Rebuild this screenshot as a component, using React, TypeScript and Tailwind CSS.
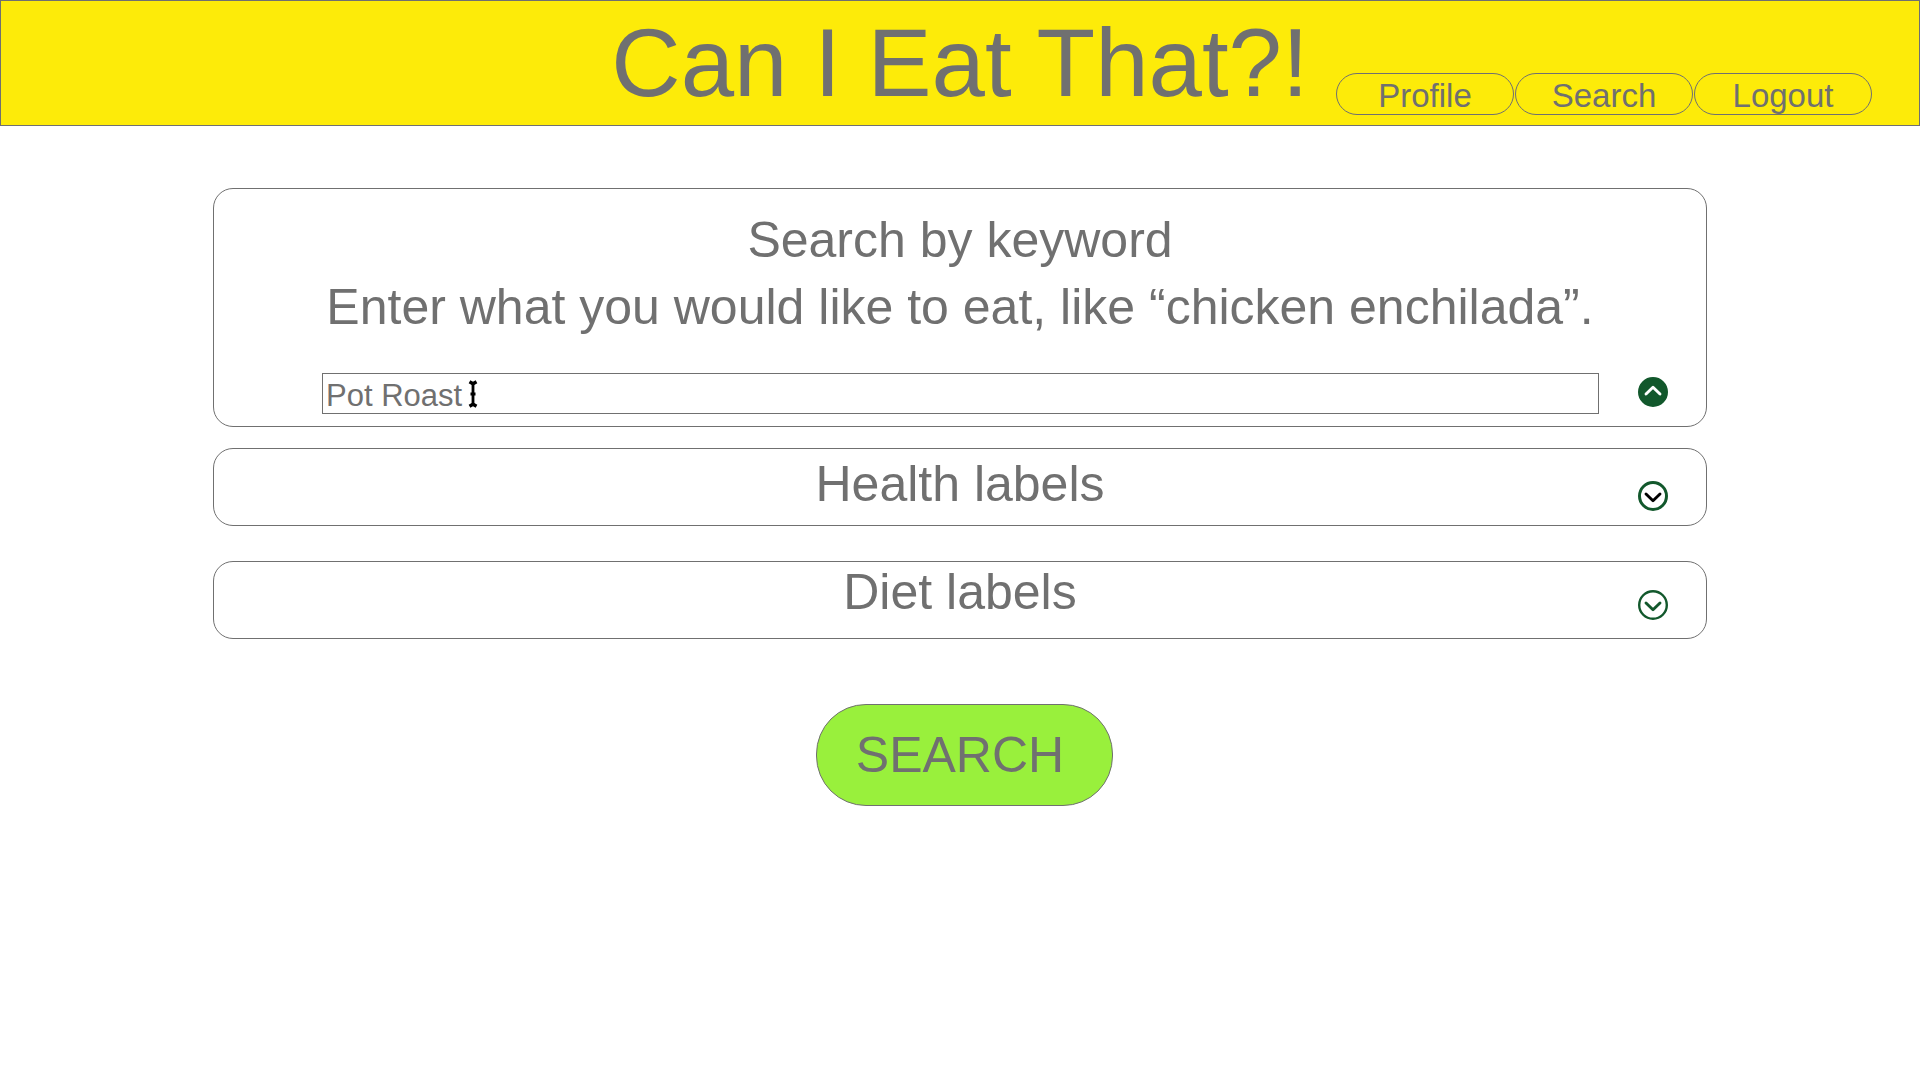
import { useState } from "react";

type ChevronProps = { direction: "up" | "down"; ring: string; fill: string; stroke: string; ringWidth: number };

function CircleChevron({ direction, ring, fill, stroke, ringWidth }: ChevronProps) {
  return (
    <svg viewBox="0 0 30 30" className="block size-[30px]" fill="none" aria-hidden="true">
      <circle cx="15" cy="15" r={15 - ringWidth / 2} fill={fill} stroke={ring} strokeWidth={ringWidth} />
      <path
        d={direction === "up" ? "M8 17 L15 10.2 L22 17" : "M8 13 L15 19.8 L22 13"}
        stroke={stroke}
        strokeWidth="2.9"
        strokeLinecap="round"
        strokeLinejoin="round"
      />
    </svg>
  );
}

function TextCursor() {
  return (
    <svg viewBox="0 0 12 28" className="pointer-events-none absolute top-[7px] left-[146px] h-7 w-3" aria-hidden="true">
      <path
        d="M1.5 1.8 L5 3.8 L8.5 1.8 M1.5 26.2 L5 24.2 L8.5 26.2"
        fill="none"
        stroke="#000"
        strokeWidth="3.4"
      />
      <path d="M5 4 V24 M2.5 14 H7.5" fill="none" stroke="#000" strokeWidth="2.8" />
    </svg>
  );
}

const navItems = ["Profile", "Search", "Logout"];

export default function App() {
  const [keyword, setKeyword] = useState("Pot Roast");

  return (
    <div className="min-h-screen bg-white font-['Liberation_Sans',Arial,sans-serif] text-[#707070]">
      <header className="grid min-h-[126px] grid-cols-[1fr_auto_1fr] items-center border border-[#707070] bg-[#fdeb09]">
        <h1 className="col-start-2 text-[96px] leading-[108px]">Can I Eat That?!</h1>
        <nav className="mr-[47px] mb-2.5 flex gap-px self-end justify-self-end">
          {navItems.map((item) => (
            <a
              key={item}
              href={`#${item.toLowerCase()}`}
              className="flex h-[42px] w-[178px] items-center justify-center rounded-full border border-[#707070] pt-0.5 text-[33px] leading-none"
            >
              {item}
            </a>
          ))}
        </nav>
      </header>

      <main className="px-[213px] pt-[62px]">
        <section className="rounded-[20px] border border-[#707070] pt-[18px] pb-3">
          <label htmlFor="keyword" className="block text-center text-[50px] leading-[67px]">
            Search by keyword
            <br />
            Enter what you would like to eat, like “chicken enchilada”.
          </label>
          <div className="mt-8 flex items-start gap-[39px] pr-[38px] pl-27">
            <div className="relative flex-1">
              <input
                id="keyword"
                type="text"
                value={keyword}
                onChange={(event) => setKeyword(event.target.value)}
                className="block h-[41px] w-full border border-[#707070] bg-white px-[3px] pt-1 text-[31px] leading-9 outline-none"
              />
              <TextCursor />
            </div>
            <button type="button" aria-label="Collapse keyword search" className="mt-1">
              <CircleChevron direction="up" ring="#12582c" fill="#12582c" stroke="#fff" ringWidth={2} />
            </button>
          </div>
        </section>

        <section className="mt-[21px] grid min-h-[78px] grid-cols-[1fr_auto_1fr] items-start rounded-[20px] border border-[#707070]">
          <h2 className="col-start-2 pt-[5px] text-[50px] leading-[60px]">Health labels</h2>
          <button type="button" aria-label="Expand health labels" className="mt-8 mr-[38px] justify-self-end">
            <CircleChevron direction="down" ring="#12582c" fill="none" stroke="#000" ringWidth={3} />
          </button>
        </section>

        <section className="mt-[35px] grid min-h-[78px] grid-cols-[1fr_auto_1fr] items-start rounded-[20px] border border-[#707070]">
          <h2 className="col-start-2 text-[50px] leading-[60px]">Diet labels</h2>
          <button type="button" aria-label="Expand diet labels" className="mt-7 mr-[38px] justify-self-end">
            <CircleChevron direction="down" ring="#12582c" fill="none" stroke="#12582c" ringWidth={2.4} />
          </button>
        </section>

        <div className="mt-[65px] flex justify-center pl-2">
          <button
            type="submit"
            className="h-[102px] w-[297px] rounded-[50px] border border-[#707070] bg-[#99f03c] pr-2 text-[50px] leading-[60px]"
          >
            SEARCH
          </button>
        </div>
      </main>
    </div>
  );
}
